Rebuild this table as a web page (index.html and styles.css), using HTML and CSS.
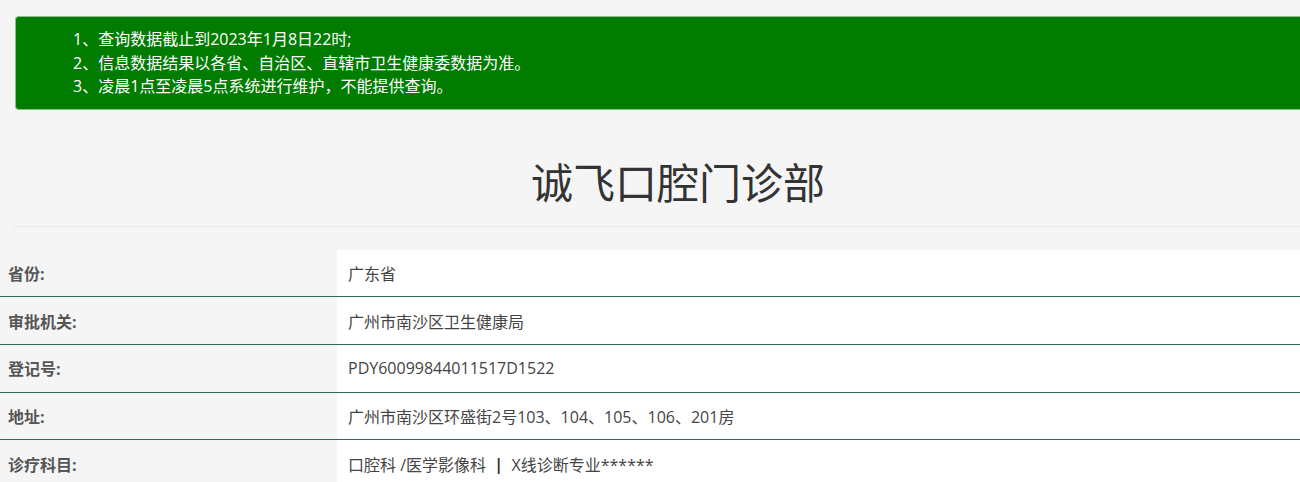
FILE: index.html
```html
<!DOCTYPE html>
<html lang="zh-CN">
<head>
<meta charset="utf-8">
<title>诚飞口腔门诊部</title>
<link rel="stylesheet" href="styles.css">
</head>
<body>
<div class="notice">
  <p>1、查询数据截止到2023年1月8日22时;</p>
  <p>2、信息数据结果以各省、自治区、直辖市卫生健康委数据为准。</p>
  <p>3、凌晨1点至凌晨5点系统进行维护，不能提供查询。</p>
</div>
<div class="title-wrap">
  <h1 class="title">诚飞口腔门诊部</h1>
</div>
<div class="info">
  <div class="row"><div class="label">省份:</div><div class="value">广东省</div></div>
  <div class="row"><div class="label">审批机关:</div><div class="value">广州市南沙区卫生健康局</div></div>
  <div class="row"><div class="label">登记号:</div><div class="value">PDY60099844011517D1522</div></div>
  <div class="row"><div class="label">地址:</div><div class="value">广州市南沙区环盛街2号103、104、105、106、201房</div></div>
  <div class="row"><div class="label">诊疗科目:</div><div class="value">口腔科 /医学影像科 &nbsp;<b class="sep">|</b>&nbsp; X线诊断专业******</div></div>
</div>
</body>
</html>
```
FILE: styles.css
```css
html, body {
  margin: 0;
  padding: 0;
  overflow: hidden;
}
body {
  background: #f5f5f5;
  font-family: "Open Sans", "Noto Sans CJK SC", "Microsoft YaHei", sans-serif;
  color: #333;
}
.notice {
  margin: 16px 0 0 15px;
  background: #007c00;
  border: 1px solid #8cbf8c;
  border-right: none;
  border-radius: 4px 0 0 4px;
  padding: 11px 0 10px 57px;
  color: #fff;
  font-size: 16px;
  line-height: 23.5px;
}
.notice p {
  margin: 0;
}
.title-wrap {
  margin: 46px 0 0 13px;
  padding-bottom: 20px;
  border-bottom: 1px solid #e9e9e9;
}
.title {
  margin: 0;
  padding-left: 43px;
  text-align: center;
  font-family: "Noto Sans CJK SC", sans-serif;
  font-size: 42px;
  line-height: 50px;
  font-weight: normal;
  color: #333;
}
.info {
  margin-top: 23px;
}
.row {
  display: grid;
  grid-template-columns: 337px 1fr;
  height: 47.7px;
  box-sizing: border-box;
  border-bottom: 1px solid #2f6e4e;
}
.label {
  display: flex;
  align-items: center;
  padding-left: 8px;
  font-size: 16px;
  font-weight: bold;
  color: #555;
}
.value {
  display: flex;
  align-items: center;
  padding-left: 11px;
  background: #fff;
  font-size: 16px;
  color: #444;
  white-space: pre;
}
.sep {
  font-weight: bold;
  color: #333;
}
```
